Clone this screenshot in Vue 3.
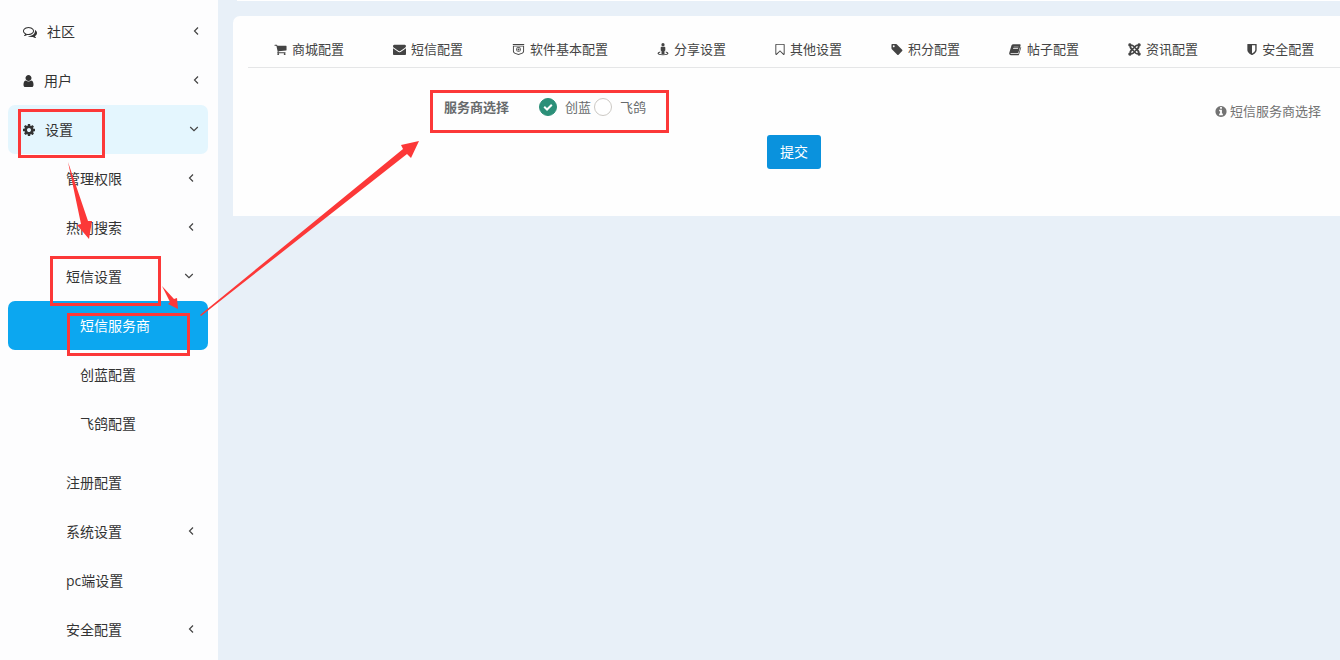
<script setup>
import { ref } from 'vue'

const icons = {
  comments: 'M704 384q-153 0-286 52t-211.5 141-78.5 191q0 82 53 158t149 132l97 56-35 84q34-20 62-39l44-31 53 10q78 14 153 14 153 0 286-52t211.5-141 78.5-191-78.5-191-211.5-141-286-52zm0-128q191 0 353.5 68.5t256.5 186.5 94 257-94 257-256.5 186.5-353.5 68.5q-86 0-176-16-124 88-278 128-36 9-86 16h-3q-11 0-20.5-8t-11.5-21q-1-3-1-6.5t.5-6.5 2-6l2.5-5 3.5-5.5 4-5 4.5-5 4-4.5q5-6 23-25t26-29.5 22.5-29 25-38.5 20.5-44q-124-72-195-177t-71-224q0-139 94-257t256.5-186.5 353.5-68.5zm822 1169q10 24 20.5 44t25 38.5 22.5 29 26 29.5 23 25q1 1 4 4.5t4.5 5 4 5 3.5 5.5l2.5 5 2 6 .5 6.5-1 6.5q-3 14-13 22t-22 7q-50-7-86-16-154-40-278-128-90 16-176 16-271 0-472-132 58 4 88 4 161 0 309-45t264-129q125-92 192-212t67-254q0-77-23-152 129 71 204 178t75 230q0 120-71 224.5t-195 176.5z',
  user: 'M1536 1399q0 109-62.5 187t-150.5 78h-854q-88 0-150.5-78t-62.5-187q0-85 8.5-160.5t31.5-152 58.5-131 94-89 134.5-34.5q131 128 313 128t313-128q76 0 134.5 34.5t94 89 58.5 131 31.5 152 8.5 160.5zm-256-887q0 159-112.5 271.5t-271.5 112.5-271.5-112.5-112.5-271.5 112.5-271.5 271.5-112.5 271.5 112.5 112.5 271.5z',
  cog: 'M1152 896q0-106-75-181t-181-75-181 75-75 181 75 181 181 75 181-75 75-181zm512-109v222q0 12-8 23t-20 13l-185 28q-19 54-39 91 35 50 107 138 10 12 10 25t-9 23q-27 37-99 108t-94 71q-12 0-26-9l-138-108q-44 23-91 38-16 136-29 186-7 28-36 28h-222q-14 0-24.5-8.5t-11.5-21.5l-28-184q-49-16-90-37l-141 107q-10 9-25 9-14 0-25-11-126-114-165-168-7-10-7-23 0-12 8-23 15-21 51-66.5t54-70.5q-27-50-41-99l-183-27q-13-2-21-12.5t-8-23.5v-222q0-12 8-23t19-13l186-28q14-46 39-92-40-57-107-138-10-12-10-24 0-10 9-23 26-36 98.5-107.5t94.5-71.5q13 0 26 10l138 107q44-23 91-38 16-136 29-186 7-28 36-28h222q14 0 24.5 8.5t11.5 21.5l28 184q49 16 90 37l142-107q9-9 24-9 13 0 25 10 129 119 165 170 7 8 7 22 0 12-8 23-15 21-51 66.5t-54 70.5q26 50 41 98l183 28q13 2 21 12.5t8 23.5z',
  cart: 'M704 1536q0 52-38 90t-90 38-90-38-38-90 38-90 90-38 90 38 38 90zm896 0q0 52-38 90t-90 38-90-38-38-90 38-90 90-38 90 38 38 90zm128-1088v512q0 24-16.5 42.5t-40.5 21.5l-1044 122q13 60 13 70 0 16-24 64h920q26 0 45 19t19 45-19 45-45 19h-1024q-26 0-45-19t-19-45q0-11 8-31.5t16-36 21.5-40 15.5-29.5l-177-823h-204q-26 0-45-19t-19-45 19-45 45-19h256q16 0 28.5 6.5t19.5 15.5 13 24.5 8 26 5.5 29.5 4.5 26h1201q26 0 45 19t19 45z',
  envelope: 'M1792 710v794q0 66-47 113t-113 47h-1472q-66 0-113-47t-47-113v-794q44 49 101 87 362 246 497 345 57 42 92.5 65.5t94.5 48 110 24.5h2q51 0 110-24.5t94.5-48 92.5-65.5q170-123 498-345 57-39 100-87zm0-294q0 79-49 151t-122 123q-376 261-468 325-10 7-42.5 31t-54 38.5-52 32.5-57.5 27-50 9h-2q-23 0-50-9t-57.5-27-52-32.5-54-38.5-42.5-31q-91-64-262-182.5t-205-142.5q-62-42-117-115.5t-55-136.5q0-78 41.5-130t118.5-52h1472q65 0 112.5 47t47.5 113z',
  safe: 'M110 128h1572v150h-1572zM128 380h130v700q0 180 120 250l518 200 518-200q120-70 120-250v-700h130v720q0 270-200 350l-568 220-568-220q-200-80-200-350zM258 380h1276v90h-1276zM896 560a330 330 0 1 1 0 660a330 330 0 1 1 0-660zm0 110a220 220 0 1 0 0 440a220 220 0 1 0 0-440zm0 80a140 140 0 1 1 0 280a140 140 0 1 1 0-280z',
  street: 'M896 0a225 225 0 1 1 0 450a225 225 0 1 1 0-450zM700 500h392q120 0 120 120v380q0 90-110 100v400h-412v-400q-110-10-110-100v-380q0-120 120-120zM520 1180v130q-210 50-210 120 0 130 586 130t586-130q0-70-210-120v-130q380 70 380 250 0 270-756 270t-756-270q0-180 380-250z',
  bookmark: 'M1408 256h-1024v1242l423-406 89-85 89 85 423 406v-1242zm12-128q23 0 44 9 33 13 52.5 41t19.5 62v1289q0 34-19.5 62t-52.5 41q-19 8-44 8-48 0-83-32l-441-424-441 424q-36 33-83 33-23 0-44-9-33-13-52.5-41t-19.5-62v-1289q0-34 19.5-62t52.5-41q21-9 44-9h1048z',
  tag: 'M576 448q0-53-37.5-90.5t-90.5-37.5-90.5 37.5-37.5 90.5 37.5 90.5 90.5 37.5 90.5-37.5 37.5-90.5zm1067 576q0 53-37 90l-491 492q-39 37-91 37-53 0-90-37l-715-716q-38-37-64.5-101t-26.5-117v-416q0-52 38-90t90-38h416q53 0 117 26.5t102 64.5l715 714q37 39 37 91z',
  book: 'M610 170h880q150 0 110 150l-290 960q-40 120-170 120h-840q-90 0-110 60 20 70 130 70h900q70 0 90-60l300-970q90 60 60 160l-290 910q-40 130-170 130h-920q-190 0-250-190-30-90 0-160l310-1030q60-150 260-150zM650 500l-30 90h680l30-90zM580 730l-30 90h680l30-90z',
  joomla: 'M330 130a200 200 0 0 1 195 155q150-30 270 80l100 100 100-100q120-110 272-80a200 200 0 1 1 240 240q30 150-80 270l-100 100 100 100q110 120 80 272a200 200 0 1 1-240 240q-152 30-272-80l-100-100-100 100q-120 110-270 80a200 200 0 1 1-240-240q-30-152 80-272l100-100-100-100q-110-120-80-270a200 200 0 0 1 45-395zM670 520q-80-80-150-20-60 70 20 150l95 95 140-130zM1122 520l-95 95 130 140 95-95q80-90 20-150-70-60-150 10zM540 1140q-80 90-20 150 70 60 150-20l100-95-130-130zM1252 1140l-95-95-130 140 95 95q90 70 150 10 60-70-20-150zM896 740l-150 155 150 155 150-155z',
  shield: 'M1344 960v-640h-448v1137q119-63 213-137 235-184 235-360zm192-768v768q0 86-33.5 170.5t-83 150-118 127.5-126.5 103-121 77.5-89.5 49.5-42.5 20q-12 6-26 6t-26-6q-16-7-42.5-20t-89.5-49.5-121-77.5-126.5-103-118-127.5-83-150-33.5-170.5v-768q0-26 19-45t45-19h1152q26 0 45 19t19 45z',
  info: 'M1152 1376v-160q0-14-9-23t-23-9h-96v-512q0-14-9-23t-23-9h-320q-14 0-23 9t-9 23v160q0 14 9 23t23 9h96v320h-96q-14 0-23 9t-9 23v160q0 14 9 23t23 9h448q14 0 23-9t9-23zm-128-896v-160q0-14-9-23t-23-9h-192q-14 0-23 9t-9 23v160q0 14 9 23t23 9h192q14 0 23-9t9-23zm640 416q0 209-103 385.5t-279.5 279.5-385.5 103-385.5-103-279.5-279.5-103-385.5 103-385.5 279.5-279.5 385.5-103 385.5 103 279.5 279.5 103 385.5z'
}

// level: nesting depth; arrow: state of the expand marker; box: glyph viewBox
const menu = [
  { label: '社区', level: 'top', icon: 'comments', box: '0 0 1792 1792', size: 'wide', arrow: 'left' },
  { label: '用户', level: 'top', icon: 'user', box: '256 0 1280 1792', size: 'slim', arrow: 'left' },
  { label: '设置', level: 'top', icon: 'cog', box: '128 0 1536 1792', size: 'mid', arrow: 'down', state: 'open' },
  { label: '管理权限', level: 'sub', arrow: 'left' },
  { label: '热门搜索', level: 'sub', arrow: 'left' },
  { label: '短信设置', level: 'sub', arrow: 'down' },
  { label: '短信服务商', level: 'leaf', state: 'active' },
  { label: '创蓝配置', level: 'leaf' },
  { label: '飞鸽配置', level: 'leaf', state: 'last' },
  { label: '注册配置', level: 'sub' },
  { label: '系统设置', level: 'sub', arrow: 'left' },
  { label: 'pc端设置', level: 'sub' },
  { label: '安全配置', level: 'sub', arrow: 'left' }
]

const tabs = [
  { label: '商城配置', icon: 'cart', box: '64 0 1664 1792', size: 'w13' },
  { label: '短信配置', icon: 'envelope', box: '0 0 1792 1792', size: 'w13' },
  { label: '软件基本配置', icon: 'safe', box: '60 0 1672 1792', size: 'w13' },
  { label: '分享设置', icon: 'street', box: '100 0 1592 1792', size: 'w12' },
  { label: '其他设置', icon: 'bookmark', box: '256 0 1280 1792', size: 'w10' },
  { label: '积分配置', icon: 'tag', box: '128 0 1536 1792', size: 'w12' },
  { label: '帖子配置', icon: 'book', box: '60 0 1672 1792', size: 'w13' },
  { label: '资讯配置', icon: 'joomla', box: '100 100 1592 1592', size: 'w13' },
  { label: '安全配置', icon: 'shield', box: '256 0 1280 1792', size: 'w10' }
]

const providers = [
  { value: 'chuanglan', label: '创蓝' },
  { value: 'feige', label: '飞鸽' }
]
const provider = ref('chuanglan')
</script>

<template>
  <div class="app">
    <nav class="sidebar">
      <a
        v-for="(item, i) in menu"
        :key="i"
        href="#"
        class="item"
        :class="[item.level, item.state]"
      >
        <svg v-if="item.icon" class="glyph" :class="item.size" :viewBox="item.box" aria-hidden="true">
          <path :d="icons[item.icon]" />
        </svg>
        <span class="text">{{ item.label }}</span>
        <svg v-if="item.arrow === 'left'" class="arrow left" viewBox="0 0 6 10" aria-hidden="true">
          <path d="M5 1.5L1.5 5L5 8.5" />
        </svg>
        <svg v-if="item.arrow === 'down'" class="arrow down" viewBox="0 0 10 6" aria-hidden="true">
          <path d="M1.2 1L5 4.6L8.8 1" />
        </svg>
      </a>
    </nav>

    <main class="main">
      <div class="topbar"></div>
      <section class="card">
        <div class="tabs">
          <a v-for="tab in tabs" :key="tab.label" href="#" class="tab">
            <svg class="glyph" :class="tab.size" :viewBox="tab.box" aria-hidden="true">
              <path :d="icons[tab.icon]" fill-rule="evenodd" />
            </svg>
            <span>{{ tab.label }}</span>
          </a>
        </div>
        <form class="form" @submit.prevent>
          <div class="row">
            <span id="provider-label" class="label">服务商选择</span>
            <div class="options" role="radiogroup" aria-labelledby="provider-label">
              <label v-for="p in providers" :key="p.value" class="option">
                <span class="mark">
                  <input v-model="provider" type="radio" name="provider" :value="p.value" />
                  <svg class="tick" viewBox="0 0 18 18" aria-hidden="true">
                    <path d="M5.2 8.8L8 11.5L12.8 6.7" />
                  </svg>
                </span>
                <span>{{ p.label }}</span>
              </label>
            </div>
            <span class="hint">
              <svg class="glyph w12" viewBox="128 0 1536 1792" aria-hidden="true">
                <path :d="icons.info" />
              </svg>
              <span>短信服务商选择</span>
            </span>
          </div>
          <button type="submit" class="submit">提交</button>
        </form>
      </section>
    </main>

    <svg class="notes" width="700" height="380" viewBox="0 0 700 380" aria-hidden="true">
      <g class="frames">
        <rect x="19.5" y="110.5" width="84" height="46" />
        <rect x="51.5" y="257.5" width="108" height="47" />
        <rect x="68.5" y="314.5" width="120" height="40" />
        <rect x="431.5" y="91.5" width="236" height="40" />
      </g>
      <g class="pointers">
        <path d="M68 162L88 221L92 221L89 239L77 225L81 224Z" />
        <path d="M162 286L174 299L177 298L178 309L168 304L170 302Z" />
        <path d="M200 315L403 149L401 145L419 141L411 158L407 154L201 316Z" />
      </g>
    </svg>
  </div>
</template>

<style>
body {
  margin: 0;
  background: #e8f0f8;
}
</style>

<style scoped>
.app {
  position: relative;
  display: flex;
  min-height: 100vh;
  overflow: hidden;
  font-family: "Open Sans", "Noto Sans CJK SC", sans-serif;
  font-size: 14px;
  color: #333;
}
a {
  color: inherit;
  text-decoration: none;
}
.glyph {
  flex: none;
  fill: currentColor;
}
.sidebar {
  box-sizing: border-box;
  flex: none;
  width: 218px;
  padding: 7px 10px 7px 8px;
  background: #fdfdfe;
}
.item {
  box-sizing: border-box;
  display: flex;
  align-items: center;
  height: 49px;
  padding: 0 9px 0 15px;
  border-radius: 7px;
  line-height: 20px;
}
.item .glyph {
  height: 14px;
}
.wide {
  width: 14px;
  margin-right: 10px;
}
.mid {
  width: 12px;
  margin-right: 10px;
}
.slim {
  width: 11px;
  margin-right: 10px;
}
.text {
  flex: 1;
}
.sub {
  padding: 0 14px 0 58px;
}
.leaf {
  padding-left: 72px;
}
.open {
  background: #e4f6fe;
}
.active {
  background: #0ca7f0;
  color: #fff;
}
.last {
  margin-bottom: 10px;
}
.arrow {
  flex: none;
  margin-bottom: 2px;
  fill: none;
  stroke: #444;
  stroke-width: 1.2;
}
.left {
  width: 6px;
  height: 10px;
}
.down {
  width: 10px;
  height: 6px;
}
.main {
  flex: 1;
  min-width: 0;
  padding-left: 15px;
}
.topbar {
  height: 1px;
  margin-left: 4px;
  background: #fff;
}
.card {
  box-sizing: border-box;
  min-height: 200px;
  margin-top: 15px;
  padding: 16px 0 0 15px;
  border-radius: 7px 0 0 0;
  background: #fefefe;
}
.tabs {
  display: flex;
  gap: 49px;
  padding: 0 0 1px 26px;
  border-bottom: 1px solid #e5e6e7;
  font-size: 13px;
  line-height: 34px;
  white-space: nowrap;
  color: #444;
}
.tab {
  display: flex;
  align-items: center;
  gap: 5px;
}
.tab .glyph,
.hint .glyph {
  height: 13px;
}
.w10 {
  width: 10px;
}
.w12 {
  width: 12px;
}
.w13 {
  width: 13px;
}
.form {
  display: flex;
  flex-direction: column;
  align-items: center;
  font-size: 13px;
  color: #676a6c;
}
.row {
  box-sizing: border-box;
  display: flex;
  align-items: flex-start;
  width: 100%;
  padding: 29px 19px 0 196px;
  line-height: 20px;
}
.label {
  margin-right: 30px;
  font-weight: 700;
}
.options {
  display: flex;
  gap: 3px;
}
.option {
  display: flex;
  align-items: center;
  gap: 8px;
}
.mark {
  display: grid;
}
.mark > * {
  grid-area: 1 / 1;
}
.mark input {
  box-sizing: border-box;
  width: 18px;
  height: 18px;
  margin: 0;
  appearance: none;
  border: 1px solid #ccc9c4;
  border-radius: 50%;
  background: #fff;
}
.mark input:checked {
  border-color: #2b8f78;
  background: #2b8f78;
}
.tick {
  width: 18px;
  height: 18px;
  fill: none;
  stroke: #fff;
  stroke-width: 2;
  pointer-events: none;
}
.hint {
  display: flex;
  align-items: center;
  gap: 3px;
  margin: 4px 0 0 auto;
  color: #737373;
}
.submit {
  height: 34px;
  margin-top: 14px;
  padding: 0 13px 2px;
  border: 0;
  border-radius: 3px;
  background: #0a92dd;
  color: #fff;
  font: inherit;
  font-size: 14px;
}
.notes {
  position: absolute;
  top: 0;
  left: 0;
  pointer-events: none;
}
.frames {
  fill: none;
  stroke: #fc3838;
  stroke-width: 3;
}
.pointers {
  fill: #fc3838;
}
</style>
